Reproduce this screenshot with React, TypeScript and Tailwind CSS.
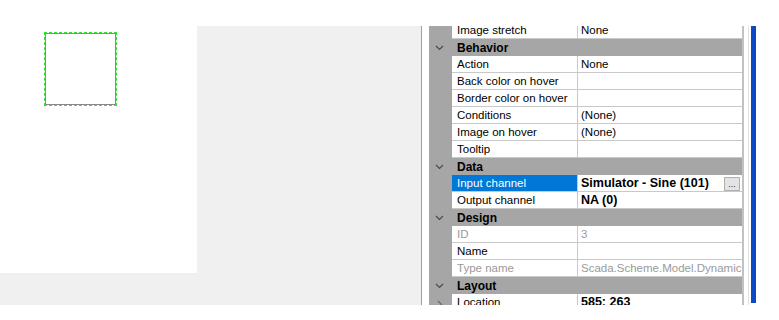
type Row =
  | { kind: "cat"; name: string }
  | {
      kind: "prop";
      label: string;
      value?: string;
      bold?: boolean;
      disabled?: boolean;
      selected?: boolean;
      button?: boolean;
      expand?: boolean;
    };

const rows: Row[] = [
  { kind: "prop", label: "Image stretch", value: "None" },
  { kind: "cat", name: "Behavior" },
  { kind: "prop", label: "Action", value: "None" },
  { kind: "prop", label: "Back color on hover" },
  { kind: "prop", label: "Border color on hover" },
  { kind: "prop", label: "Conditions", value: "(None)" },
  { kind: "prop", label: "Image on hover", value: "(None)" },
  { kind: "prop", label: "Tooltip" },
  { kind: "cat", name: "Data" },
  {
    kind: "prop",
    label: "Input channel",
    value: "Simulator - Sine (101)",
    bold: true,
    selected: true,
    button: true,
  },
  { kind: "prop", label: "Output channel", value: "NA (0)", bold: true },
  { kind: "cat", name: "Design" },
  { kind: "prop", label: "ID", value: "3", disabled: true },
  { kind: "prop", label: "Name" },
  {
    kind: "prop",
    label: "Type name",
    value: "Scada.Scheme.Model.DynamicPicture",
    disabled: true,
  },
  { kind: "cat", name: "Layout" },
  { kind: "prop", label: "Location", value: "585; 263", bold: true, expand: true },
];

function Chevron({ open }: { open: boolean }) {
  return open ? (
    <svg width="9" height="6" viewBox="0 0 9 6">
      <path d="M1 1 L4.5 4.5 L8 1" fill="none" stroke="#4a4a4a" strokeWidth="1.2" />
    </svg>
  ) : (
    <svg width="6" height="9" viewBox="0 0 6 9">
      <path d="M1 1 L4.5 4.5 L1 8" fill="none" stroke="#6a6a6a" strokeWidth="1.2" />
    </svg>
  );
}

function GridRow({ row }: { row: Row }) {
  if (row.kind === "cat") {
    return (
      <div className="flex h-[17px] items-center bg-[#a6a6a6]">
        <div className="flex w-[23px] items-center pl-[6px]">
          <Chevron open />
        </div>
        <span className="pt-[1px] pl-[5px] text-[12px] font-bold leading-none">{row.name}</span>
      </div>
    );
  }
  return (
    <div className="flex h-[17px]">
      <div className="flex w-[23px] items-center bg-[#a6a6a6] pt-[4px] pl-[8px]">
        {row.expand && <Chevron open={false} />}
      </div>
      <div
        className={
          row.selected
            ? "flex w-[126px] items-center border-r border-b border-r-[#c9c9c9] border-b-[#c9c9c9] bg-[#0078d7] pt-[1px] pl-[5px] leading-none text-white"
            : row.disabled
              ? "flex w-[126px] items-center border-r border-b border-[#c9c9c9] pt-[1px] pl-[5px] leading-none text-[#9a9a9a]"
              : "flex w-[126px] items-center border-r border-b border-[#c9c9c9] pt-[1px] pl-[5px] leading-none"
        }
      >
        {row.label}
      </div>
      <div className="flex flex-1 items-center overflow-hidden border-b border-[#c9c9c9] pt-[1px] pl-[3px]">
        <span
          className={
            row.bold
              ? "whitespace-nowrap text-[12.5px] font-bold leading-none"
              : row.disabled
                ? "whitespace-nowrap leading-none text-[#9a9a9a]"
                : "whitespace-nowrap leading-none"
          }
        >
          {row.value}
        </span>
        {row.button && (
          <div className="mr-[2px] ml-auto flex h-[14px] w-[16px] shrink-0 items-end justify-center border border-[#b0b0b0] bg-[#e3e3e3] pb-[1px] text-[9px] leading-none text-[#333]">
            ...
          </div>
        )}
      </div>
    </div>
  );
}

export default function App() {
  return (
    <div className="flex h-[320px] w-[779px] overflow-hidden bg-white font-['Liberation_Sans',Arial,sans-serif] text-[11.5px] text-black">
      <div className="flex w-[197px] shrink-0 flex-col">
        <div className="h-[273px] bg-white pt-[32px] pl-[44px]">
          <div className="h-[74px] w-[73px] border border-dashed border-[#2ee62e]">
            <div className="h-full w-full border border-[#8a8a8a]" />
          </div>
        </div>
        <div className="h-[32px] bg-[#f0f0f0]" />
      </div>
      <div className="flex w-[224px] shrink-0 flex-col">
        <div className="h-[26px] bg-white" />
        <div className="h-[279px] bg-[#f0f0f0]" />
      </div>
      <div className="mt-[26px] flex h-[279px] shrink-0 border-l border-[#a0a0a0] bg-white pl-[7px]">
        <div className="h-[279px] w-[313px] overflow-hidden">
          <div className="-mt-[4px]">
            {rows.map((r, i) => (
              <GridRow key={i} row={r} />
            ))}
          </div>
        </div>
        <div className="w-[2px] bg-[#c2c2c2]" />
        <div className="w-[4px]" />
        <div className="w-[1px] bg-[#e2e2e2]" />
        <div className="w-[2px]" />
        <div className="h-[277px] w-[5px] bg-[#0b49c6]" />
      </div>
    </div>
  );
}
